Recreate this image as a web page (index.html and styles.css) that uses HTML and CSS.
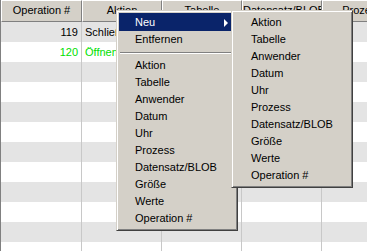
FILE: index.html
```html
<!DOCTYPE html>
<html lang="de">
<head>
    <meta charset="UTF-8">
    <title>Protokoll</title>
    <link rel="stylesheet" href="styles.css">
</head>
<body>
    <!-- LIST OF OPERATIONS -->
    <div class="grid">
        <div class="head">
            <div class="hcell first">Operation #</div>
            <div class="hcell">Aktion</div>
            <div class="hcell">Tabelle</div>
            <div class="hcell">Datensatz/BLOB</div>
            <div class="hcell">Prozess</div>
        </div>
        <div class="row odd"><div class="cell first num">119</div><div class="cell">Schließen</div><div class="cell"></div><div class="cell"></div><div class="cell"></div></div>
        <div class="row green"><div class="cell first num">120</div><div class="cell">Öffnen</div><div class="cell"></div><div class="cell"></div><div class="cell"></div></div>
        <div class="row odd"><div class="cell first"></div><div class="cell"></div><div class="cell"></div><div class="cell"></div><div class="cell"></div></div>
        <div class="row"><div class="cell first"></div><div class="cell"></div><div class="cell"></div><div class="cell"></div><div class="cell"></div></div>
        <div class="row odd"><div class="cell first"></div><div class="cell"></div><div class="cell"></div><div class="cell"></div><div class="cell"></div></div>
        <div class="row"><div class="cell first"></div><div class="cell"></div><div class="cell"></div><div class="cell"></div><div class="cell"></div></div>
        <div class="row odd"><div class="cell first"></div><div class="cell"></div><div class="cell"></div><div class="cell"></div><div class="cell"></div></div>
        <div class="row"><div class="cell first"></div><div class="cell"></div><div class="cell"></div><div class="cell"></div><div class="cell"></div></div>
        <div class="row odd"><div class="cell first"></div><div class="cell"></div><div class="cell"></div><div class="cell"></div><div class="cell"></div></div>
        <div class="row"><div class="cell first"></div><div class="cell"></div><div class="cell"></div><div class="cell"></div><div class="cell"></div></div>
        <div class="row odd"><div class="cell first"></div><div class="cell"></div><div class="cell"></div><div class="cell"></div><div class="cell"></div></div>
        <div class="row"><div class="cell first"></div><div class="cell"></div><div class="cell"></div><div class="cell"></div><div class="cell"></div></div>
    </div>

    <!-- CONTEXT MENU -->
    <div class="menu main">
        <div class="item active">Neu</div>
        <div class="item">Entfernen</div>
        <div class="sep"></div>
        <div class="item">Aktion</div>
        <div class="item">Tabelle</div>
        <div class="item">Anwender</div>
        <div class="item">Datum</div>
        <div class="item">Uhr</div>
        <div class="item">Prozess</div>
        <div class="item">Datensatz/BLOB</div>
        <div class="item">Größe</div>
        <div class="item">Werte</div>
        <div class="item">Operation #</div>
    </div>

    <!-- SUBMENU OF "NEU" -->
    <div class="menu sub">
        <div class="item">Aktion</div>
        <div class="item">Tabelle</div>
        <div class="item">Anwender</div>
        <div class="item">Datum</div>
        <div class="item">Uhr</div>
        <div class="item">Prozess</div>
        <div class="item">Datensatz/BLOB</div>
        <div class="item">Größe</div>
        <div class="item">Werte</div>
        <div class="item">Operation #</div>
    </div>
</body>
</html>
```

FILE: styles.css
```css
/*PAGE*/
body{
    margin: 0;
    background-color: #fff;
    font-family: "Liberation Sans", Arial, sans-serif;
    font-size: 11px;
    color: #000;
    overflow: hidden;
}
/*TABLE*/
.grid{
    border-left: 1px solid #808080;
    height: 251px;
    overflow: hidden;
}
.head, .row{
    display: flex;
}
.hcell{
    flex: 0 0 80px;
    box-sizing: border-box;
    height: 22px;
    line-height: 19px;
    background-color: #d4d0c8;
    border-top: 1px solid #fff;
    border-left: 1px solid #fff;
    border-right: 1px solid #808080;
    border-bottom: 1px solid #808080;
    text-align: center;
    white-space: nowrap;
    overflow: hidden;
}
.hcell.first{flex-basis: 81px;}
.cell{
    flex: 0 0 80px;
    box-sizing: border-box;
    height: 20px;
    line-height: 20px;
    border-right: 1px solid #c8c8c8;
    padding-left: 3px;
    white-space: nowrap;
    overflow: hidden;
}
.cell.first{flex-basis: 81px;}
.cell.num{
    text-align: right;
    padding: 0 3px 0 0;
}
.row.odd{background-color: #e4e4e4;}
.row.green{color: #00e000;}
/*MENUS*/
.menu{
    position: absolute;
    top: 10px;
    width: 122px;
    box-sizing: border-box;
    padding: 2px 2px 3px;
    background-color: #d4d0c8;
    border: 1px solid;
    border-color: #d4d0c8 #404040 #404040 #d4d0c8;
    box-shadow: inset 1px 1px #fff, inset -1px -1px #808080;
}
.main{left: 116px;}
.sub{left: 231px; z-index: 2;}
.item{
    position: relative;
    height: 17px;
    line-height: 17px;
    padding-left: 16px;
    white-space: nowrap;
}
.main .item:first-child{
    height: 18px;
    line-height: 19px;
}
.sub .item:first-child{margin-top: 1px;}
.sub .item{padding-left: 17px;}
.item.active{
    background-color: #0a246a;
    color: #fff;
}
.item.active::after{
    content: "";
    position: absolute;
    right: 7px;
    top: 6px;
    border-left: 4px solid #fff;
    border-top: 4px solid transparent;
    border-bottom: 4px solid transparent;
}
.sep{
    height: 9px;
    padding-top: 4px;
    box-sizing: border-box;
}
.sep::before{
    content: "";
    display: block;
    border-top: 1px solid #808080;
    border-bottom: 1px solid #fff;
    margin: 0 1px;
}
```
